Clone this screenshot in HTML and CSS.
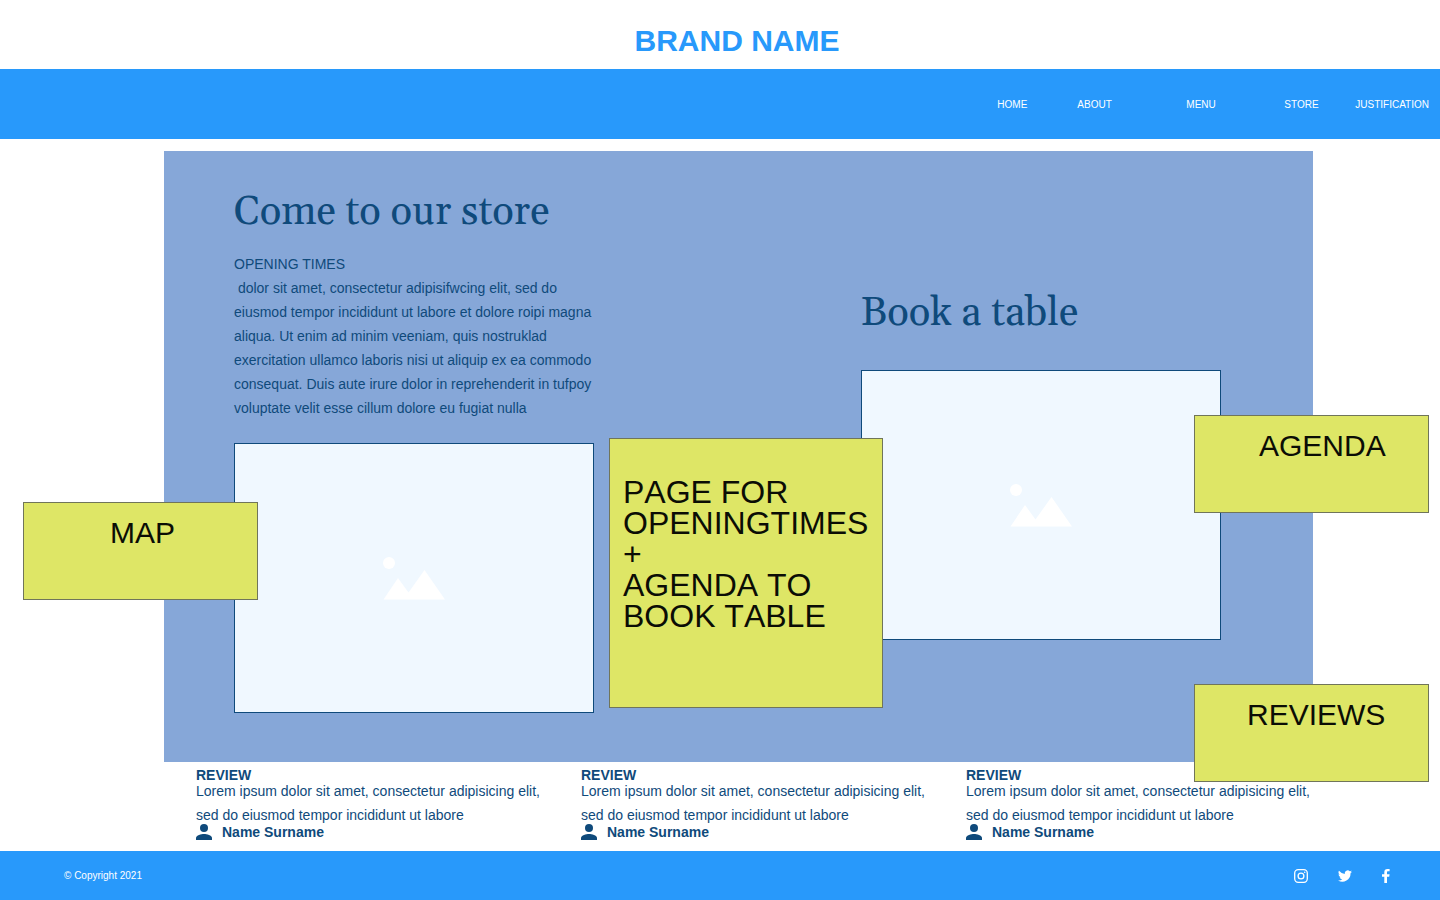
FILE: index.html
```html
<!DOCTYPE html>
<html lang="en">
<head>
<meta charset="utf-8">
<meta name="viewport" content="width=device-width, initial-scale=1">
<title>Brand Name – Store</title>
<link rel="stylesheet" href="styles.css">
</head>
<body>
<header>
  <h1 class="brand">BRAND NAME</h1>
  <nav class="nav">
    <a href="#">HOME</a>
    <a href="#">ABOUT</a>
    <a href="#">MENU</a>
    <a href="#">STORE</a>
    <a href="#">JUSTIFICATION</a>
  </nav>
</header>
<main>
  <section class="store">
    <div class="column">
      <h2>Come to our store</h2>
      <p class="opening">OPENING TIMES<br>&nbsp;dolor sit amet, consectetur adipisifwcing elit, sed do<br>eiusmod tempor incididunt ut labore et dolore roipi magna<br>aliqua. Ut enim ad minim veeniam, quis nostruklad<br>exercitation ullamco laboris nisi ut aliquip ex ea commodo<br>consequat. Duis aute irure dolor in reprehenderit in tufpoy<br>voluptate velit esse cillum dolore eu fugiat nulla</p>
      <div class="picture">
        <svg width="62" height="44" viewBox="0 0 62 44" fill="#fff" aria-hidden="true"><circle cx="6" cy="7" r="6"/><path d="M0.500 43.500 15 22 25.500 36.500 41.500 14 62 43.500z"/></svg>
      </div>
    </div>
    <div class="column column-book">
      <h2>Book a table</h2>
      <div class="picture">
        <svg width="62" height="44" viewBox="0 0 62 44" fill="#fff" aria-hidden="true"><circle cx="6" cy="7" r="6"/><path d="M0.500 43.500 15 22 25.500 36.500 41.500 14 62 43.500z"/></svg>
      </div>
    </div>
    <aside class="note note-map">MAP</aside>
    <aside class="note note-page">PAGE FOR<br>OPENINGTIMES<br>+<br>AGENDA TO<br>BOOK TABLE</aside>
    <aside class="note note-agenda">AGENDA</aside>
    <aside class="note note-reviews">REVIEWS</aside>
  </section>
  <section class="reviews">
    <article class="review">
      <h3>REVIEW</h3>
      <p>Lorem ipsum dolor sit amet, consectetur adipisicing elit,<br>sed do eiusmod tempor incididunt ut labore</p>
      <div class="author"><svg width="16" height="16" viewBox="0 0 16 16" fill="#0f4a7b" aria-hidden="true"><circle cx="8" cy="4" r="4"/><path d="M0 16v-2c0-2.700 5.300-4 8-4s8 1.300 8 4v2z"/></svg>Name Surname</div>
    </article>
    <article class="review">
      <h3>REVIEW</h3>
      <p>Lorem ipsum dolor sit amet, consectetur adipisicing elit,<br>sed do eiusmod tempor incididunt ut labore</p>
      <div class="author"><svg width="16" height="16" viewBox="0 0 16 16" fill="#0f4a7b" aria-hidden="true"><circle cx="8" cy="4" r="4"/><path d="M0 16v-2c0-2.700 5.300-4 8-4s8 1.300 8 4v2z"/></svg>Name Surname</div>
    </article>
    <article class="review">
      <h3>REVIEW</h3>
      <p>Lorem ipsum dolor sit amet, consectetur adipisicing elit,<br>sed do eiusmod tempor incididunt ut labore</p>
      <div class="author"><svg width="16" height="16" viewBox="0 0 16 16" fill="#0f4a7b" aria-hidden="true"><circle cx="8" cy="4" r="4"/><path d="M0 16v-2c0-2.700 5.300-4 8-4s8 1.300 8 4v2z"/></svg>Name Surname</div>
    </article>
  </section>
</main>
<footer class="footer">
  <span>© Copyright 2021</span>
  <div class="social">
    <a href="#" aria-label="Instagram"><svg width="14" height="14" viewBox="0 0 14 14" fill="none" stroke="#fff" stroke-width="1.300"><rect x=".7" y=".7" width="12.600" height="12.600" rx="3.500"/><circle cx="7" cy="7" r="2.900"/><circle cx="10.700" cy="3.300" r=".8" fill="#fff" stroke="none"/></svg></a>
    <a href="#" aria-label="Twitter"><svg width="14" height="14" viewBox="0 0 24 24" fill="#fff"><path d="M24 4.600a10 10 0 0 1-2.800.8 5 5 0 0 0 2.200-2.700c-1 .5-2 1-3.200 1.200a4.900 4.900 0 0 0-8.400 4.500A14 14 0 0 1 1.700 3.100 4.900 4.900 0 0 0 3.200 9.700a5 5 0 0 1-2.200-.6c0 2.300 1.600 4.400 3.900 4.900a5 5 0 0 1-2.200.1 4.900 4.900 0 0 0 4.600 3.400A9.900 9.900 0 0 1 0 19.500 14 14 0 0 0 21.500 7.100c1-.7 1.800-1.600 2.500-2.500z"/></svg></a>
    <a href="#" aria-label="Facebook"><svg width="8" height="14" viewBox="0 0 8 14" fill="#fff"><path d="M2.300 14V7.700H0V5.200h2.300V3.300C2.300 1.100 3.500 0 5.400 0H7.600v2.300H6.200C5.200 2.300 5 2.800 5 3.500v1.700h2.600l-.4 2.500H5V14z"/></svg></a>
  </div>
</footer>
</body>
</html>
```
FILE: styles.css
```css
* { box-sizing: border-box; }
body {
  margin: 0;
  min-height: 100vh;
  display: flex;
  flex-direction: column;
  background: #fff;
  color: #0f4a7b;
  font: 14px/24px Arial, "Liberation Sans", sans-serif;
}
h1, h2, h3, p { margin: 0; }
a { color: inherit; text-decoration: none; }
svg { display: block; }

.brand {
  padding: 23px 0 10px 34px;
  text-align: center;
  font-size: 30px;
  line-height: 36px;
  color: #2899fb;
}
.nav {
  display: grid;
  grid-template-columns: 80px 109px 98px 71px auto;
  justify-content: end;
  align-items: center;
  height: 70px;
  padding: 2px 11px 0 0;
  background: #2899fb;
  color: #fff;
  font-size: 10px;
}

.store {
  position: relative;
  display: flex;
  justify-content: space-between;
  margin: 12px 127px 0 164px;
  padding: 38px 92px 49px 70px;
  background: #86a7d8;
}
.column { width: 360px; }
.column-book { padding-top: 101px; }
h2 {
  font: 400 40px/48px Georgia, Gelasio, "Liberation Serif", serif;
}
.opening { padding: 15px 0 23px; white-space: nowrap; }
.picture {
  display: grid;
  place-items: center;
  height: 270px;
  background: #f0f8ff;
  border: 1px solid #0f4a7b;
}
.column-book .picture { margin-top: 32px; }

.note {
  position: absolute;
  width: 235px;
  height: 98px;
  padding-top: 12px;
  background: #dee666;
  border: 1px solid #70755a;
  color: #0b0d05;
  font-size: 30px;
  line-height: 36px;
  font-kerning: none;
  white-space: nowrap;
}
.note-map { left: -141px; top: 351px; padding-left: 86px; }
.note-page {
  left: 445px;
  top: 287px;
  width: 274px;
  height: 270px;
  padding: 38px 13px;
  font-size: 32px;
  line-height: 31px;
}
.note-agenda { right: -116px; top: 264px; padding-left: 64px; }
.note-reviews { right: -116px; top: 533px; padding-left: 52px; }

.reviews {
  display: grid;
  grid-template-columns: repeat(3, 1fr);
  gap: 40px;
  margin: 5px 129px 11px 196px;
}
.review h3 { font-size: 14px; line-height: 16px; }
.review p { margin: -4px 0 -3px; white-space: nowrap; }
.author {
  display: flex;
  align-items: center;
  gap: 10px;
  font-weight: 700;
  line-height: 16px;
}

.footer {
  display: flex;
  flex-grow: 1;
  align-items: center;
  justify-content: space-between;
  padding: 0 50px 0 64px;
  background: #2899fb;
  color: #fff;
  font-size: 10px;
}
.social { display: flex; gap: 30px; }
```
